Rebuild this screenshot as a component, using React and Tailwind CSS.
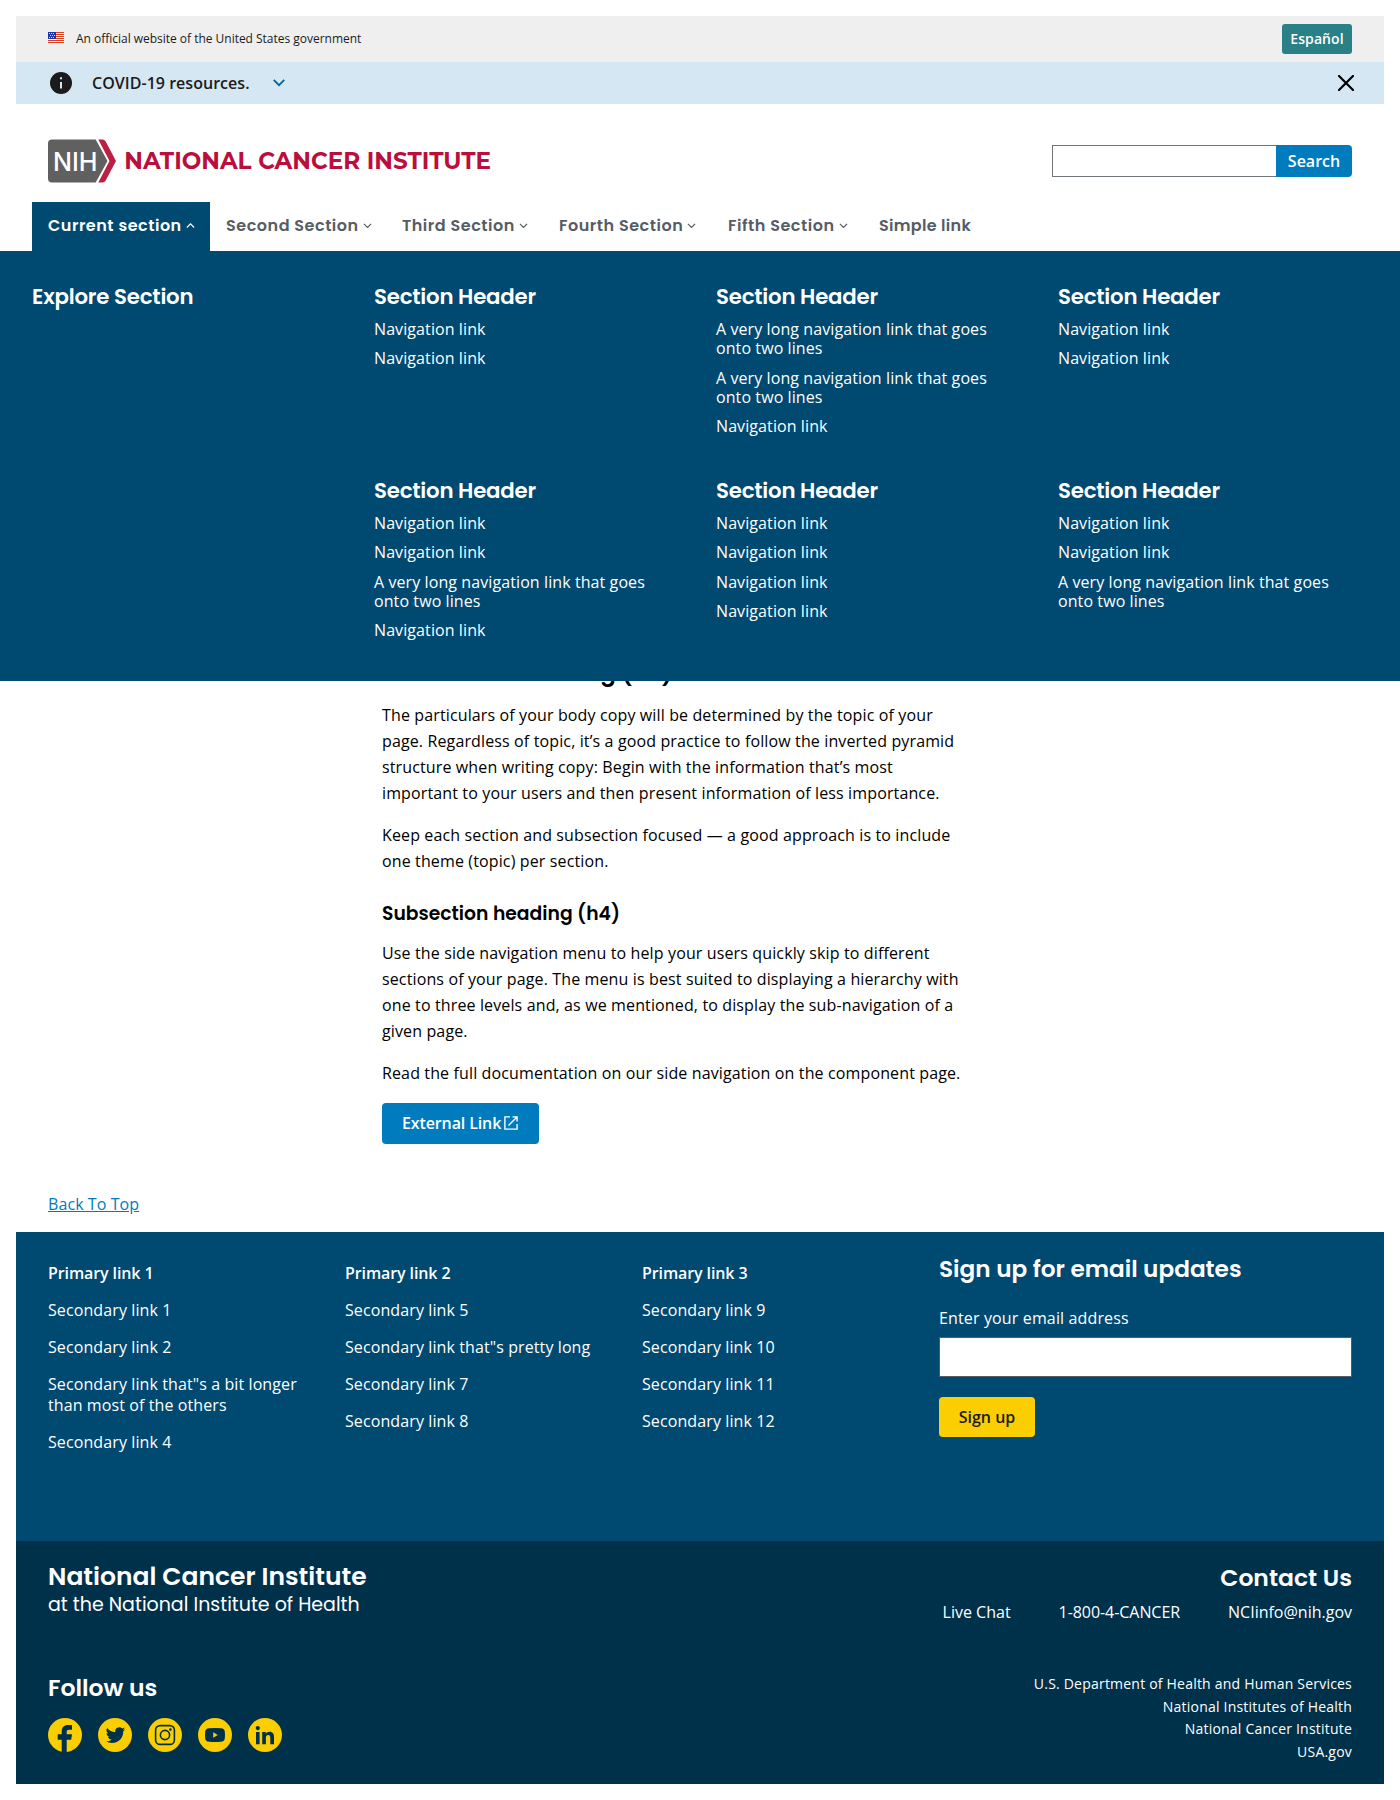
import React from "react";

const heading = "font-['Poppins','Inter',sans-serif] font-semibold whitespace-nowrap";

function Flag() {
  return (
    <svg width="16" height="11" viewBox="0 0 16 11" shapeRendering="crispEdges">
      <rect width="16" height="11" fill="#fff" />
      {[0, 2, 4, 6, 8, 10].map((y) => (
        <rect key={y} y={y} width="16" height="1" fill="#db3e1f" />
      ))}
      <rect width="8" height="7" fill="#1e33b1" />
      {[[1, 1], [3, 1], [5, 1], [2, 3], [4, 3], [6, 3], [1, 5], [3, 5], [5, 5]].map(([x, y]) => (
        <rect key={`${x}-${y}`} x={x} y={y} width="1" height="1" fill="#d8dcf5" />
      ))}
    </svg>
  );
}

function Caret({ up }) {
  return (
    <svg width="9" height="5.4" viewBox="0 0 10 6" className="ml-1" fill="none" stroke="currentColor" strokeWidth="1.3">
      <path d={up ? "M1 5 5 1l4 4" : "M1 1l4 4 4-4"} />
    </svg>
  );
}

function Logo() {
  return (
    <svg width="444" height="44" viewBox="0 0 444 44" className="overflow-visible">
      <path d="M4 .5H47.700L59.500 22 47.700 43.500H4A4 4 0 0 1 0 39.500V4.500A4 4 0 0 1 4 .5Z" fill="#606060" />
      <path d="M50.300 .5H54.500Q56.500 .5 57.700 2.500L68 22 57.700 41.500Q56.500 43.500 54.500 43.500H50.300L61.500 22Z" fill="#bb1f41" />
      <text x="4.900" y="31.600" textLength="44.600" lengthAdjust="spacingAndGlyphs" fontSize="25.700" fontFamily="Inter, sans-serif" fontWeight="500" fill="#fff">NIH</text>
      <text x="76.300" y="30" textLength="366.700" lengthAdjust="spacingAndGlyphs" fontSize="23.500" fontFamily="Montserrat, Inter, sans-serif" fontWeight="700" fill="#bb0e3d">NATIONAL CANCER INSTITUTE</text>
    </svg>
  );
}

const nav = [
  ["Second Section", "w-[176px]"],
  ["Third Section", "w-[157px]"],
  ["Fourth Section", "w-[169px]"],
  ["Fifth Section", "w-[151px]"],
];

const N = "Navigation link";
const L = "A very long navigation link that goes onto two lines";
const menu = [[N, N], [L, L, N], [N, N], [N, N, L, N], [N, N, N, N], [N, N, L]];

const footerColumns = [
  ["Primary link 1", "Secondary link 1", "Secondary link 2", 'Secondary link that"s a bit longer than most of the others', "Secondary link 4"],
  ["Primary link 2", "Secondary link 5", 'Secondary link that"s pretty long', "Secondary link 7", "Secondary link 8"],
  ["Primary link 3", "Secondary link 9", "Secondary link 10", "Secondary link 11", "Secondary link 12"],
];

function MenuColumn({ links }) {
  return (
    <div>
      <h2 className={`${heading} text-[21.3px] leading-[26px] tracking-[-0.22px]`}>Section Header</h2>
      <ul className="mt-[10.1px] flex w-[290px] flex-col gap-[10px]">
        {links.map((t, i) => (
          <li key={i} className="text-base leading-[19.2px] tracking-[0.09px]">{t}</li>
        ))}
      </ul>
    </div>
  );
}

function MegaMenu() {
  return (
    <div className="absolute inset-x-0 top-[251px] flex h-[430px] gap-8 bg-[#004971] px-8 pt-[33px] text-white">
      <h2 className={`${heading} w-[310px] text-[21.3px] leading-[26px] tracking-[-0.2px]`}>Explore Section</h2>
      <div className="grid flex-1 grid-cols-3 grid-rows-[194px_auto] gap-x-8">
        {menu.map((links, i) => (
          <MenuColumn key={i} links={links} />
        ))}
      </div>
    </div>
  );
}

const socials = [
  <path key="f" d="M13.700 34V21.700H9.700V16.300H13.700V13.300C13.700 9.300 16 7 20.200 7H24V11.700H21.300C19.400 11.700 18.700 12.600 18.700 14V16.300H24L23.200 21.700H18.700V34Z" />,
  <path key="t" transform="translate(7.800 7.500) scale(.81)" d="M23.950 4.570a10 10 0 01-2.820.770 4.960 4.960 0 002.160-2.720 9.900 9.900 0 01-3.120 1.180 4.920 4.920 0 00-8.380 4.480C7.690 8.100 4.070 6.130 1.640 3.160a4.920 4.920 0 001.520 6.570 4.900 4.900 0 01-2.230-.610v.060a4.920 4.920 0 003.950 4.830 5 5 0 01-2.210.080 4.940 4.940 0 004.600 3.420A9.870 9.870 0 010 19.540a14 14 0 007.550 2.210c9.050 0 14-7.500 14-13.980 0-.210 0-.420-.020-.630a9.940 9.940 0 002.460-2.550z" />,
  <g key="i" fill="none" stroke="#00314b" strokeWidth="1.600">
    <rect x="7.600" y="7.600" width="18.800" height="18.800" rx="4.500" />
    <circle cx="17" cy="17" r="4.600" />
    <circle cx="22.400" cy="11.600" r="1.300" fill="#00314b" stroke="none" />
  </g>,
  <path key="y" fillRule="evenodd" d="M11 10.200Q17 9.700 23 10.200 26.500 10.400 26.800 13.500 27.200 17 26.800 20.500 26.500 23.600 23 23.800 17 24.300 11 23.800 7.500 23.600 7.200 20.500 6.800 17 7.200 13.500 7.500 10.400 11 10.200ZM15.200 14.300V19.700L19.800 17Z" />,
  <path key="l" d="M8 14H11.600V26.300H8ZM9.800 8A2.100 2.100 0 1 1 9.800 12.200 2.100 2.100 0 0 1 9.800 8ZM14.200 14H17.700V15.700C18.400 14.500 19.700 13.700 21.500 13.700 25 13.700 26 16 26 19.300V26.300H22.300V20C22.300 18.400 22 17 20.300 17 18.400 17 17.900 18.300 17.900 20V26.300H14.200Z" />,
];

export default function App() {
  return (
    <div className="relative h-[1800px] w-[1400px] overflow-hidden bg-white px-4 pt-4 font-['Open_Sans',sans-serif] text-base text-[#1b1b1b]">
      <div className="flex h-[46px] items-center bg-[#efefef] px-8">
        <div className="-mt-1"><Flag /></div>
        <span className="ml-3 flex-1 text-[12px] tracking-[-0.02px]">An official website of the United States government</span>
        <button className="h-[30px] w-[70px] rounded-[3px] bg-[#298085] text-sm font-semibold tracking-[0.1px] text-white">Español</button>
      </div>

      <div className="flex h-[42px] items-center bg-[#d5e7f3] pr-[30px] pl-[34px]">
        <svg width="22" height="22" viewBox="0 0 22 22">
          <circle cx="11" cy="11" r="11" fill="#1b1b1b" />
          <path d="M10 5.300h2v2h-2zM10 10h2v6.500h-2z" fill="#d5e7f3" />
        </svg>
        <span className="ml-5 font-semibold tracking-[0.03px]">COVID-19 resources.</span>
        <svg width="12" height="8" viewBox="0 0 12 8" className="ml-[23px]" fill="none" stroke="#00669e" strokeWidth="1.800">
          <path d="M.7.900 6 6.200 11.300.900" />
        </svg>
        <svg width="16" height="16" viewBox="0 0 16 16" className="ml-auto" stroke="#000" strokeWidth="2.200" strokeLinecap="square">
          <path d="M1 1l14 14M15 1 1 15" />
        </svg>
      </div>

      <header className="flex h-[98px] items-end justify-between px-8 pb-[19px]">
        <Logo />
        <div className="mb-[6px] flex h-8">
          <input className="h-8 w-[224px] border border-r-0 border-[#71767a]" />
          <button className="w-[76px] rounded-r-[4px] bg-[#007bbd] font-semibold text-white">Search</button>
        </div>
      </header>

      <nav className={`${heading} flex h-[49px] px-4 text-base tracking-[0.52px] text-[#565c65]`}>
        <div className="flex w-[178px] items-center bg-[#004971] pb-[2px] pl-4 text-white">
          Current section<Caret up />
        </div>
        {nav.map(([t, w]) => (
          <div key={t} className={`${w} flex items-center pb-[2px] pl-4`}>
            {t}<Caret />
          </div>
        ))}
        <div className="flex items-center pb-[2px] pl-4 tracking-[0.3px]">Simple link</div>
      </nav>

      <main className="ml-[366px] h-[936px] w-[588px] pt-[407px] text-black">
        <h3 className={`${heading} text-[23px] leading-[30px]`}>Subsection heading (h3)</h3>
        <div className="mt-[14px] flex w-[580px] flex-col gap-4 leading-[26px] tracking-[0.13px]">
          <p>The particulars of your body copy will be determined by the topic of your page. Regardless of topic, it’s a good practice to follow the inverted pyramid structure when writing copy: Begin with the information that’s most important to your users and then present information of less importance.</p>
          <p>Keep each section and subsection focused — a good approach is to include one theme (topic) per section.</p>
        </div>
        <h4 className={`${heading} mt-[28px] text-[18.750px] leading-[24px]`}>Subsection heading (h4)</h4>
        <div className="mt-[14px] flex w-[580px] flex-col gap-4 leading-[26px] tracking-[0.13px]">
          <p>Use the side navigation menu to help your users quickly skip to different sections of your page. The menu is best suited to displaying a hierarchy with one to three levels and, as we mentioned, to display the sub-navigation of a given page.</p>
          <p className="whitespace-nowrap">Read the full documentation on our side navigation on the component page.</p>
        </div>
        <button className="mt-[17px] flex h-[41px] w-[157px] items-center rounded-[4px] bg-[#007bbd] pb-px pl-5 font-semibold tracking-[-0.12px] text-white">
          External Link
          <svg width="14" height="14" viewBox="0 0 14 14" className="ml-[3px]" fill="none" stroke="#fff" strokeWidth="1.400">
            <path d="M6 .9H.9V13.100H13.100V8M8.500.9H13.100V5.500M13 1 4.500 9.500" />
          </svg>
        </button>
      </main>

      <div className="flex h-[45px] items-start px-8 pt-[5px]">
        <a className="leading-[24px] tracking-[0.08px] text-[#007bbd] underline">Back To Top</a>
      </div>

      <section className="flex h-[309px] bg-[#004971] px-8 text-white">
        {footerColumns.map(([head, ...links]) => (
          <div key={head} className="flex w-[297px] flex-col gap-[16.200px] pt-[31px] leading-[20.8px]">
            <div className="font-semibold tracking-[-0.1px]">{head}</div>
            {links.map((t) => (
              <div key={t} className="w-[265px] tracking-[0.1px]">{t}</div>
            ))}
          </div>
        ))}
        <div className="flex-1 pt-[21px]">
          <h3 className={`${heading} text-[23.2px] leading-[32px]`}>Sign up for email updates</h3>
          <label className="mt-[21px] block leading-[24px] tracking-[0.14px]">Enter your email address</label>
          <input className="mt-[7px] block h-10 w-full border border-[#565c65] bg-white" />
          <button className="mt-5 h-10 w-24 rounded-[4px] bg-[#face00] font-semibold text-[#1b1b1b]">Sign up</button>
        </div>
      </section>

      <footer className="flex h-[243px] justify-between bg-[#00314b] px-8 text-white">
        <div>
          <div className={`${heading} mt-[21px] text-[25px] leading-[30px]`}>National Cancer Institute</div>
          <div className="font-['Poppins','Inter',sans-serif] text-[19px] leading-[26px]">at the National Institute of Health</div>
          <div className={`${heading} mt-[55px] text-[23.5px] leading-[30px]`}>Follow us</div>
          <div className="mt-[15px] flex gap-4">
            {socials.map((glyph, i) => (
              <svg key={i} width="34" height="34" viewBox="0 0 34 34" fill="#00314b">
                <circle cx="17" cy="17" r="17" fill="#face00" />
                {glyph}
              </svg>
            ))}
          </div>
        </div>
        <div className="text-right">
          <div className={`${heading} mt-[22px] text-[23.5px] leading-[30px]`}>Contact Us</div>
          <div className="mt-[7px] flex justify-end gap-12 leading-[24px]">
            <span>Live Chat</span><span className="tracking-[-0.06px]">1-800-4-CANCER</span><span>NCIinfo@nih.gov</span>
          </div>
          <div className="mt-[49px] text-sm leading-[22.7px] tracking-[0.21px]">
            <div>U.S. Department of Health and Human Services</div>
            <div>National Institutes of Health</div>
            <div>National Cancer Institute</div>
            <div>USA.gov</div>
          </div>
        </div>
      </footer>

      <MegaMenu />
    </div>
  );
}
